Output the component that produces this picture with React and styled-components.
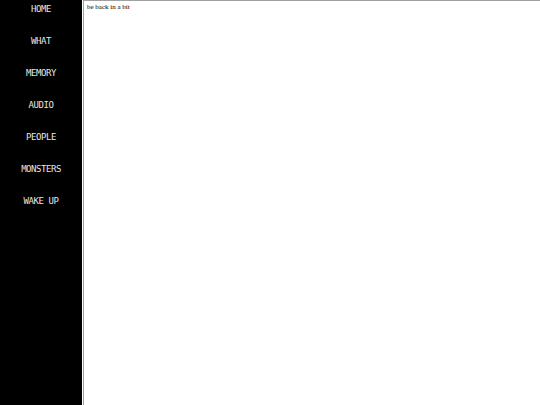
import React from "react";
import styled, { createGlobalStyle } from "styled-components";

const Global = createGlobalStyle`
  html, body { margin: 0; padding: 0; height: 100%; background: #fff; }
  #root { height: 100%; }
`;

const Page = styled.div`
  display: flex;
  height: 405px;
  width: 540px;
  overflow: hidden;
`;

const Sidebar = styled.nav`
  width: 82px;
  flex: 0 0 82px;
  background: #000;
  display: flex;
  flex-direction: column;
`;

const NavItem = styled.a`
  display: block;
  height: 32px;
  box-sizing: border-box;
  padding-top: 5px;
  text-align: center;
  color: #e6e6e6;
  font-family: "DejaVu Sans Mono", "Liberation Mono", monospace;
  font-size: 9px;
  line-height: 9px;
  letter-spacing: -0.45px;
  text-decoration: none;
  cursor: pointer;
`;

const Frame = styled.div`
  flex: 1;
  box-sizing: border-box;
  border-top: 1px solid #a0a0a0;
  border-left: 1px solid #a0a0a0;
  margin-left: 1px;
  padding: 2px 0 0 3px;
  background: #fff;
`;

const Message = styled.p`
  margin: 0;
  font-family: "Liberation Serif", "Times New Roman", serif;
  font-size: 7px;
  line-height: 9px;
  color: #000;
`;

const items = ["HOME", "WHAT", "MEMORY", "AUDIO", "PEOPLE", "MONSTERS", "WAKE UP"];

export default function App() {
  return (
    <>
      <Global />
      <Page>
        <Sidebar>
          {items.map((t) => (
            <NavItem key={t}>{t}</NavItem>
          ))}
        </Sidebar>
        <Frame>
          <Message>be back in a bit</Message>
        </Frame>
      </Page>
    </>
  );
}
